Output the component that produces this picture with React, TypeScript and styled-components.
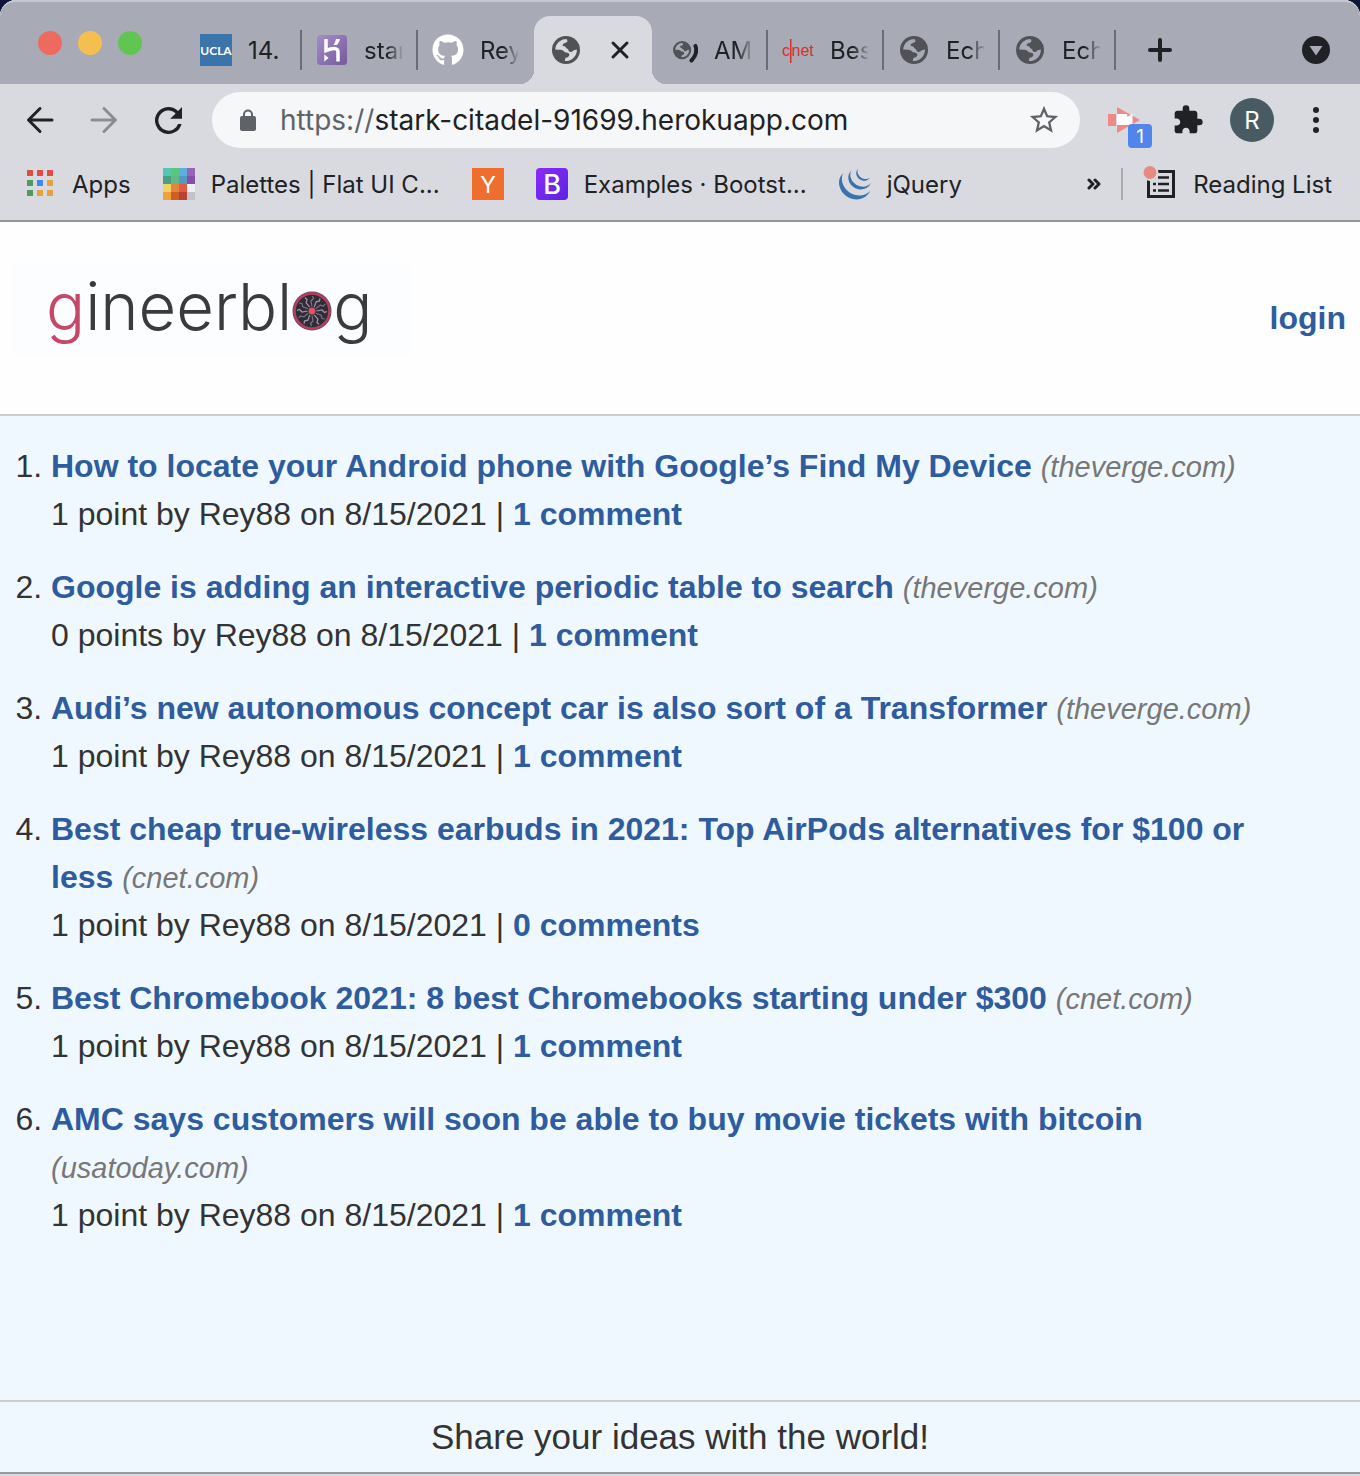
import React from "react";
import styled, { createGlobalStyle, css } from "styled-components";
import { FaGithub } from "react-icons/fa";
import { MdExtension, MdStarBorder } from "react-icons/md";
import { SiJquery } from "react-icons/si";

const color = {
  strip: "#a8aab5",
  chrome: "#d9dadf",
  ink: "#202124",
  muted: "#5f6368",
  link: "#2e5c9e",
  rule: "#cccccc",
  page: "#f0f8ff",
};

const GlobalStyle = createGlobalStyle`
  *, *::before, *::after { box-sizing: border-box; }
  body { margin: 0; background: #10163a; }
  button, input { font: inherit; color: inherit; }
  svg { display: block; flex: none; }
`;

const Window = styled.div`
  display: flex;
  flex-direction: column;
  min-height: 100vh;
  overflow: hidden;
  border-radius: 16px 16px 0 0;
  background: ${color.page};
  font-family: "Liberation Sans", Arial, Helvetica, sans-serif;
`;

const ChromeUI = styled.div`
  background: ${color.chrome};
  border-bottom: 2px solid #949499;
  color: ${color.ink};
  font-family: Inter, Roboto, sans-serif;
  font-size: 24px;
`;

const BareButton = styled.button`
  display: flex;
  align-items: center;
  justify-content: center;
  flex: none;
  padding: 0;
  border: 0;
  background: none;
  cursor: pointer;
`;

/* ---------- tab strip ---------- */

const TabStrip = styled.div`
  display: flex;
  align-items: center;
  height: 84px;
  padding: 0 28px 0 38px;
  border-top: 2px solid #c3c6ce;
  border-radius: 16px 16px 0 0;
  background: ${color.strip};
`;

const Lights = styled.div`
  display: flex;
  gap: 16px;
  margin-right: 44px;
`;

const Light = styled(BareButton)<{ $fill: string }>`
  width: 24px;
  height: 24px;
  border-radius: 50%;
  background: ${(p) => p.$fill};
`;

const Tabs = styled.div`
  display: flex;
  align-self: flex-end;
  height: 68px;
`;

const Tab = styled(BareButton)<{ $active?: boolean; $divided?: boolean }>`
  position: relative;
  justify-content: flex-start;
  gap: 16px;
  width: 116px;
  padding-left: 14px;

  ${(p) =>
    p.$divided &&
    css`
      &::after {
        content: "";
        width: 2px;
        height: 40px;
        margin-left: auto;
        background: #6b6c74;
      }
    `}

  ${(p) =>
    p.$active &&
    css`
      gap: 22px;
      width: 118px;
      padding-left: 16px;
      border-radius: 16px 16px 0 0;
      background: ${color.chrome};

      &::before,
      &::after {
        content: "";
        position: absolute;
        bottom: 0;
        width: 14px;
        height: 14px;
      }
      &::before {
        right: 100%;
        background: radial-gradient(circle at 0 0, transparent 14px, ${color.chrome} 14px);
      }
      &::after {
        left: 100%;
        background: radial-gradient(circle at 100% 0, transparent 14px, ${color.chrome} 14px);
      }
    `}
`;

const TabTitle = styled.span<{ $fits?: boolean }>`
  width: 38px;
  margin-right: -16px;
  overflow: hidden;
  white-space: nowrap;
  text-align: left;
  mask-image: ${(p) => (p.$fits ? "none" : "linear-gradient(90deg, #000 60%, transparent 105%)")};
`;

const StripButton = styled(BareButton)`
  align-self: flex-end;
  width: 32px;
  height: 68px;
`;

const NewTab = styled(StripButton)`
  margin: 0 auto 0 28px;
`;

/* ---------- address bar ---------- */

const Toolbar = styled.div`
  display: flex;
  align-items: center;
  gap: 28px;
  height: 72px;
  padding: 0 28px 0 24px;
`;

const NavButtons = styled.div`
  display: flex;
  gap: 32px;
`;

const ToolButton = styled(BareButton)`
  position: relative;
  width: 32px;
  height: 32px;
`;

const AddressBar = styled.form`
  display: flex;
  align-items: center;
  flex: 1;
  min-width: 0;
  height: 56px;
  padding: 0 20px 0 28px;
  border-radius: 28px;
  background: #f6f7f9;
  font-size: 28px;
`;

const Scheme = styled.label`
  margin-left: 24px;
  color: ${color.muted};
`;

const UrlInput = styled.input`
  flex: 1;
  min-width: 0;
  padding: 0;
  border: 0;
  outline: 0;
  background: none;
`;

const Actions = styled.div`
  display: flex;
  align-items: center;
  gap: 26px;
`;

const Extensions = styled.div`
  display: flex;
  gap: 32px;
`;

const Badge = styled.span`
  position: absolute;
  top: 20px;
  left: 20px;
  width: 24px;
  height: 24px;
  border-radius: 4px;
  background: #5185ec;
  color: #fff;
  font-size: 19px;
  line-height: 26px;
  text-align: center;
`;

const Avatar = styled(BareButton)`
  width: 44px;
  height: 44px;
  border-radius: 50%;
  background: #485a62;
  color: #fff;
`;

/* ---------- bookmarks ---------- */

const Bookmarks = styled.nav`
  display: flex;
  align-items: center;
  gap: 32px;
  height: 64px;
  padding: 0 28px 8px 24px;
`;

const Bookmark = styled.a`
  display: flex;
  align-items: center;
  gap: 16px;
  color: inherit;
  text-decoration: none;
  white-space: nowrap;
`;

const BookmarkEnd = styled.div`
  display: flex;
  align-items: center;
  gap: 20px;
  margin-left: auto;
`;

const Divider = styled.span`
  width: 2px;
  height: 32px;
  background: #a9abb0;
`;

const ReadingButton = styled(BareButton)`
  gap: 18px;
  white-space: nowrap;
`;

/* ---------- page ---------- */

const Header = styled.header`
  display: flex;
  align-items: center;
  justify-content: space-between;
  height: 194px;
  padding: 0 14px 0 10px;
  border-bottom: 2px solid ${color.rule};
  background: #fefefe;
`;

const Logo = styled.a`
  display: flex;
  width: 400px;
  height: 92px;
  margin-bottom: 16px;
  padding-left: 36px;
  background: #fcfdfe;
  color: #3b3b3d;
  font-family: Inter, Roboto, sans-serif;
  font-size: 65px;
  font-weight: 300;
  line-height: 86px;
  text-decoration: none;

  svg {
    margin: 27px 1px 0 0;
  }
`;

const Accent = styled.span`
  color: #c74768;
`;

const PageLink = styled.a`
  color: ${color.link};
  font-size: 32px;
  font-weight: 700;
  text-decoration: none;
`;

const Main = styled.main`
  flex: 1;
  color: #333;
  font-size: 32px;
  line-height: 48px;
`;

const StoryList = styled.ol`
  display: flex;
  flex-direction: column;
  gap: 25px;
  margin: 0;
  padding: 26px 64px 26px 51px;
`;

const Story = styled.li`
  display: list-item;
`;

const Domain = styled.span`
  color: #777;
  font-size: 29px;
  font-style: italic;
  line-height: 1;
  white-space: nowrap;
`;

const Meta = styled.div``;

const Footer = styled.footer`
  padding: 10px 0 12px;
  border-top: 2px solid ${color.rule};
  border-bottom: 2px solid ${color.chrome};
  box-shadow: inset 0 -2px 0 #98969f;
  color: #333;
  font-size: 35px;
  line-height: 50px;
  text-align: center;
`;

/* ---------- drawings ---------- */

const LAND =
  "M3.2 13.6A10.9 10.9 0 0 1 14.5 3.1L15.6 5.2C15 7 11.5 6.6 10.6 8.8C10.2 10.4 13.4 10 13.9 11.4C14.2 12.8 16.4 12.4 16.6 14.4C17.2 16.4 20.5 16.4 21.6 14.2L24.9 13.6A10.9 10.9 0 0 1 12.6 24.8L13.6 21.8C17.2 21.4 18.2 18.6 16.6 17.2C14.8 15.8 13.6 17.2 12 15.4C10.6 13.4 7 14.4 3.2 13.6Z";

const Globe = ({ hole }: { hole: string }) => (
  <svg width="32" height="32" viewBox="-2 -2 32 32">
    <circle cx="14" cy="14" r="14" fill="#505256" />
    <path fill={hole} d={LAND} />
  </svg>
);

const LoadingGlobe = () => (
  <svg width="32" height="32" viewBox="0 0 32 32">
    <g transform="translate(7 7) scale(.65)">
      <circle cx="14" cy="14" r="14" fill="#505256" />
      <path fill={color.strip} d={LAND} />
    </g>
    <path d="M29.500 12Q32 20 25.500 26.500" fill="none" stroke={color.ink} strokeWidth="4" strokeLinecap="round" />
  </svg>
);

const Ucla = () => (
  <svg width="32" height="32" viewBox="0 0 32 32">
    <rect width="32" height="32" fill="#3b73ab" />
    <text x="16" y="20.500" fill="#fff" fontFamily="Lato, sans-serif" fontWeight="700" fontSize="12" textAnchor="middle">
      UCLA
    </text>
  </svg>
);

const Heroku = () => (
  <svg width="32" height="32" viewBox="0 0 32 32">
    <defs>
      <linearGradient id="heroku" x1="0" y1="0" x2="1" y2="1">
        <stop offset="0" stopColor="#a58cc9" />
        <stop offset="1" stopColor="#745a9b" />
      </linearGradient>
    </defs>
    <rect x="1" y="1" width="30" height="30" rx="3.500" fill="url(#heroku)" />
    <path d="M10 5V16.500Q22 12 22 18V27.500" fill="none" stroke="#fff" strokeWidth="3.500" />
    <path d="M20 5H24Q23.500 8 21 11H17.500Q19.500 8 20 5ZM8.300 20.500L12.600 24L8.300 27.500Z" fill="#fff" />
  </svg>
);

const Cnet = () => (
  <svg width="32" height="32" viewBox="0 0 32 32">
    <g fill="#d8302a" fontFamily="'Liberation Sans', sans-serif" fontSize="16">
      <text x="0" y="22">c</text>
      <rect x="8" y="5" width="1.500" height="24" />
      <text x="9.500" y="22">net</text>
    </g>
  </svg>
);

const Stroke = styled.svg`
  fill: none;
  stroke: currentColor;
  stroke-width: 3;
  stroke-linecap: round;
  stroke-linejoin: round;
`;

const ForwardArrow = styled(Stroke)`
  color: #8b8d92;
`;

const AppsGrid = () => {
  const fills = ["#e54b40", "#e54b40", "#e54b40", "#519a5f", "#4285f4", "#e7a33b", "#519a5f", "#e7a33b", "#e7a33b"];
  return (
    <svg width="32" height="32" viewBox="0 0 32 32">
      {fills.map((f, i) => (
        <rect key={i} x={3 + (i % 3) * 10} y={2 + Math.floor(i / 3) * 10} width="6" height="6" fill={f} />
      ))}
    </svg>
  );
};

const Palette = () => {
  const fills = [
    "#57c6b1", "#58c87c", "#5faee0", "#9763b4",
    "#479f88", "#62b987", "#5698c4", "#8650a6",
    "#f5d063", "#e48639", "#e35b41", "#edf0f1",
    "#f1a03d", "#cf5d26", "#b8432f", "#bfc5ca",
  ];
  return (
    <svg width="32" height="32" viewBox="0 0 32 32" shapeRendering="crispEdges">
      {fills.map((f, i) => (
        <rect key={i} x={(i % 4) * 8} y={Math.floor(i / 4) * 8} width="8" height="8" fill={f} />
      ))}
    </svg>
  );
};

const HackerNews = () => (
  <svg width="32" height="32" viewBox="0 0 32 32">
    <rect width="32" height="32" fill="#ee6f2d" />
    <text x="16" y="24.500" fill="#fff" fontFamily="Inter, sans-serif" fontSize="23" textAnchor="middle">Y</text>
  </svg>
);

const Bootstrap = () => (
  <svg width="32" height="32" viewBox="0 0 32 32">
    <defs>
      <linearGradient id="bootstrap" x1="0" y1="0" x2="1" y2="1">
        <stop offset="0" stopColor="#8a2cf8" />
        <stop offset="1" stopColor="#5a24e0" />
      </linearGradient>
    </defs>
    <rect width="32" height="32" rx="4" fill="url(#bootstrap)" />
    <text x="16" y="26" fill="#fff" fontFamily="Inter, sans-serif" fontWeight="500" fontSize="27" textAnchor="middle">B</text>
  </svg>
);

const Recorder = () => (
  <svg width="32" height="28" viewBox="0 0 32 28">
    <path d="M0 8H8V20H0ZM9 1L32 14L9 27Z" fill="#ee8a86" />
    <path d="M9 8H18Q19.500 8 19.500 11L24.500 7.500V19H9Z" fill="#fff" />
  </svg>
);

const ReadingIcon = () => (
  <svg width="32" height="36" viewBox="0 0 32 36">
    <path d="M5.500 5.500H30.500V30.500H5.500Z" fill="none" stroke={color.ink} strokeWidth="3" />
    <path d="M10 11.500h3m2 0h11M10 18h3m2 0h11M10 24.500h3m2 0h11" stroke={color.ink} strokeWidth="2.500" />
    <circle cx="7" cy="6.500" r="7.500" fill="#e48c82" stroke={color.chrome} strokeWidth="2" />
  </svg>
);

/* Turbine wheel standing in for the "o" of the wordmark. */
const Wheel = () => (
  <svg width="40" height="40" viewBox="0 0 40 40" role="img" aria-label="o">
    <circle cx="20" cy="20" r="19.500" fill="#5d4a55" />
    <circle cx="20" cy="20" r="17.500" fill="#2f2c35" stroke="#b3405f" strokeWidth="2.500" />
    {Array.from({ length: 12 }, (_, i) => (
      <path
        key={i}
        d="M20 15.500L19 10L21.500 7.500L20.500 5"
        fill="none"
        stroke={i % 2 ? "#a898a8" : "#7d7484"}
        strokeWidth="1.200"
        transform={`rotate(${i * 30} 20 20)`}
      />
    ))}
    <circle cx="20" cy="20" r="3.500" fill="#e0506f" />
  </svg>
);

/* ---------- data ---------- */

const tabs = [
  { title: "14.", icon: <Ucla />, divided: true, fits: true },
  { title: "star", icon: <Heroku />, divided: true },
  { title: "Rey", icon: <FaGithub size={32} color="#fff" />, divided: false },
  { title: "", icon: <Globe hole={color.chrome} />, active: true },
  { title: "AM", icon: <LoadingGlobe />, divided: true },
  { title: "Bes", icon: <Cnet />, divided: true },
  { title: "Ech", icon: <Globe hole={color.strip} />, divided: true },
  { title: "Ech", icon: <Globe hole={color.strip} />, divided: true },
];

const bookmarks = [
  { label: "Apps", icon: <AppsGrid /> },
  { label: "Palettes | Flat UI C...", icon: <Palette /> },
  { label: "", icon: <HackerNews /> },
  { label: "Examples · Bootst...", icon: <Bootstrap /> },
  { label: "jQuery", icon: <SiJquery size={32} color="#3a72ad" /> },
];

const stories = [
  { title: "How to locate your Android phone with Google’s Find My Device", domain: "theverge.com", points: "1 point", comments: "1 comment" },
  { title: "Google is adding an interactive periodic table to search", domain: "theverge.com", points: "0 points", comments: "1 comment" },
  { title: "Audi’s new autonomous concept car is also sort of a Transformer", domain: "theverge.com", points: "1 point", comments: "1 comment" },
  { title: "Best cheap true-wireless earbuds in 2021: Top AirPods alternatives for $100 or less", domain: "cnet.com", points: "1 point", comments: "0 comments" },
  { title: "Best Chromebook 2021: 8 best Chromebooks starting under $300", domain: "cnet.com", points: "1 point", comments: "1 comment" },
  { title: "AMC says customers will soon be able to buy movie tickets with bitcoin", domain: "usatoday.com", points: "1 point", comments: "1 comment" },
];

export default function App() {
  return (
    <>
      <GlobalStyle />
      <Window>
        <ChromeUI>
          <TabStrip>
            <Lights>
              <Light $fill="#ee6a5f" aria-label="Close window" />
              <Light $fill="#f5bf4f" aria-label="Minimize window" />
              <Light $fill="#61c554" aria-label="Zoom window" />
            </Lights>
            <Tabs>
              {tabs.map((t, i) => (
                <Tab key={i} $active={t.active} $divided={t.divided} aria-label={t.title || "Current tab"}>
                  {t.icon}
                  {t.active ? (
                    <Stroke width="32" height="32" viewBox="0 0 32 32">
                      <path d="M9 9L23 23M23 9L9 23" />
                    </Stroke>
                  ) : (
                    <TabTitle $fits={t.fits}>{t.title}</TabTitle>
                  )}
                </Tab>
              ))}
            </Tabs>
            <NewTab aria-label="New tab">
              <svg width="32" height="32" viewBox="0 0 32 32" fill="none" stroke={color.ink} strokeWidth="4" strokeLinecap="round">
                <path d="M16 6V26M6 16H26" />
              </svg>
            </NewTab>
            <StripButton aria-label="Search tabs">
              <svg width="32" height="32" viewBox="0 0 32 32">
                <circle cx="16" cy="16" r="14" fill={color.ink} />
                <path d="M9.500 12H22.500L16 21.500Z" fill={color.strip} />
              </svg>
            </StripButton>
          </TabStrip>

          <Toolbar>
            <NavButtons>
              <ToolButton aria-label="Back">
                <Stroke width="32" height="32" viewBox="0 0 32 32">
                  <path d="M28 16H5M16 4.500L4.500 16L16 27.500" />
                </Stroke>
              </ToolButton>
              <ToolButton aria-label="Forward">
                <ForwardArrow width="32" height="32" viewBox="0 0 32 32">
                  <path d="M4 16H27M16 4.500L27.500 16L16 27.500" />
                </ForwardArrow>
              </ToolButton>
              <ToolButton aria-label="Reload">
                <svg width="27" height="27" viewBox="4 4 16 16" fill={color.ink}>
                  <path d="M17.650 6.350A7.960 7.960 0 0 0 12 4a8 8 0 1 0 7.730 10h-2.080A6 6 0 1 1 12 6c1.660 0 3.140.690 4.220 1.780L13 11h7V4l-2.350 2.350z" />
                </svg>
              </ToolButton>
            </NavButtons>

            <AddressBar onSubmit={(e) => e.preventDefault()}>
              <svg width="16" height="22" viewBox="0 0 16 22">
                <rect y="7" width="16" height="15" rx="2" fill={color.muted} />
                <path d="M4 8V5.500a4 4 0 0 1 8 0V8" fill="none" stroke={color.muted} strokeWidth="2" />
              </svg>
              <Scheme htmlFor="address">https://</Scheme>
              <UrlInput id="address" defaultValue="stark-citadel-91699.herokuapp.com" spellCheck={false} />
              <ToolButton type="button" aria-label="Bookmark this page">
                <MdStarBorder size={34} color={color.muted} />
              </ToolButton>
            </AddressBar>

            <Actions>
              <Extensions>
                <ToolButton aria-label="Screen recorder">
                  <Recorder />
                  <Badge>1</Badge>
                </ToolButton>
                <ToolButton aria-label="Extensions">
                  <MdExtension size={32} />
                </ToolButton>
              </Extensions>
              <Avatar aria-label="Profile">R</Avatar>
              <ToolButton aria-label="Menu">
                <svg width="32" height="32" viewBox="0 0 32 32" fill={color.ink}>
                  <circle cx="16" cy="6" r="3" />
                  <circle cx="16" cy="16" r="3" />
                  <circle cx="16" cy="26" r="3" />
                </svg>
              </ToolButton>
            </Actions>
          </Toolbar>

          <Bookmarks aria-label="Bookmarks">
            {bookmarks.map((b, i) => (
              <Bookmark key={i} href="#">
                {b.icon}
                {b.label && <span>{b.label}</span>}
              </Bookmark>
            ))}
            <BookmarkEnd>
              <BareButton aria-label="More bookmarks">
                <Stroke width="14" height="12" viewBox="0 0 14 12">
                  <path d="M2 2L6 6L2 10M8 2L12 6L8 10" />
                </Stroke>
              </BareButton>
              <Divider />
              <ReadingButton>
                <ReadingIcon />
                Reading List
              </ReadingButton>
            </BookmarkEnd>
          </Bookmarks>
        </ChromeUI>

        <Header>
          <Logo href="#">
            <Accent>g</Accent>
            <span>ineerbl</span>
            <Wheel />
            <span>g</span>
          </Logo>
          <PageLink href="#">login</PageLink>
        </Header>

        <Main>
          <StoryList>
            {stories.map((s) => (
              <Story key={s.title}>
                <PageLink href="#">{s.title}</PageLink> <Domain>({s.domain})</Domain>
                <Meta>
                  {s.points} by Rey88 on 8/15/2021 | <PageLink href="#">{s.comments}</PageLink>
                </Meta>
              </Story>
            ))}
          </StoryList>
        </Main>

        <Footer>Share your ideas with the world!</Footer>
      </Window>
    </>
  );
}
